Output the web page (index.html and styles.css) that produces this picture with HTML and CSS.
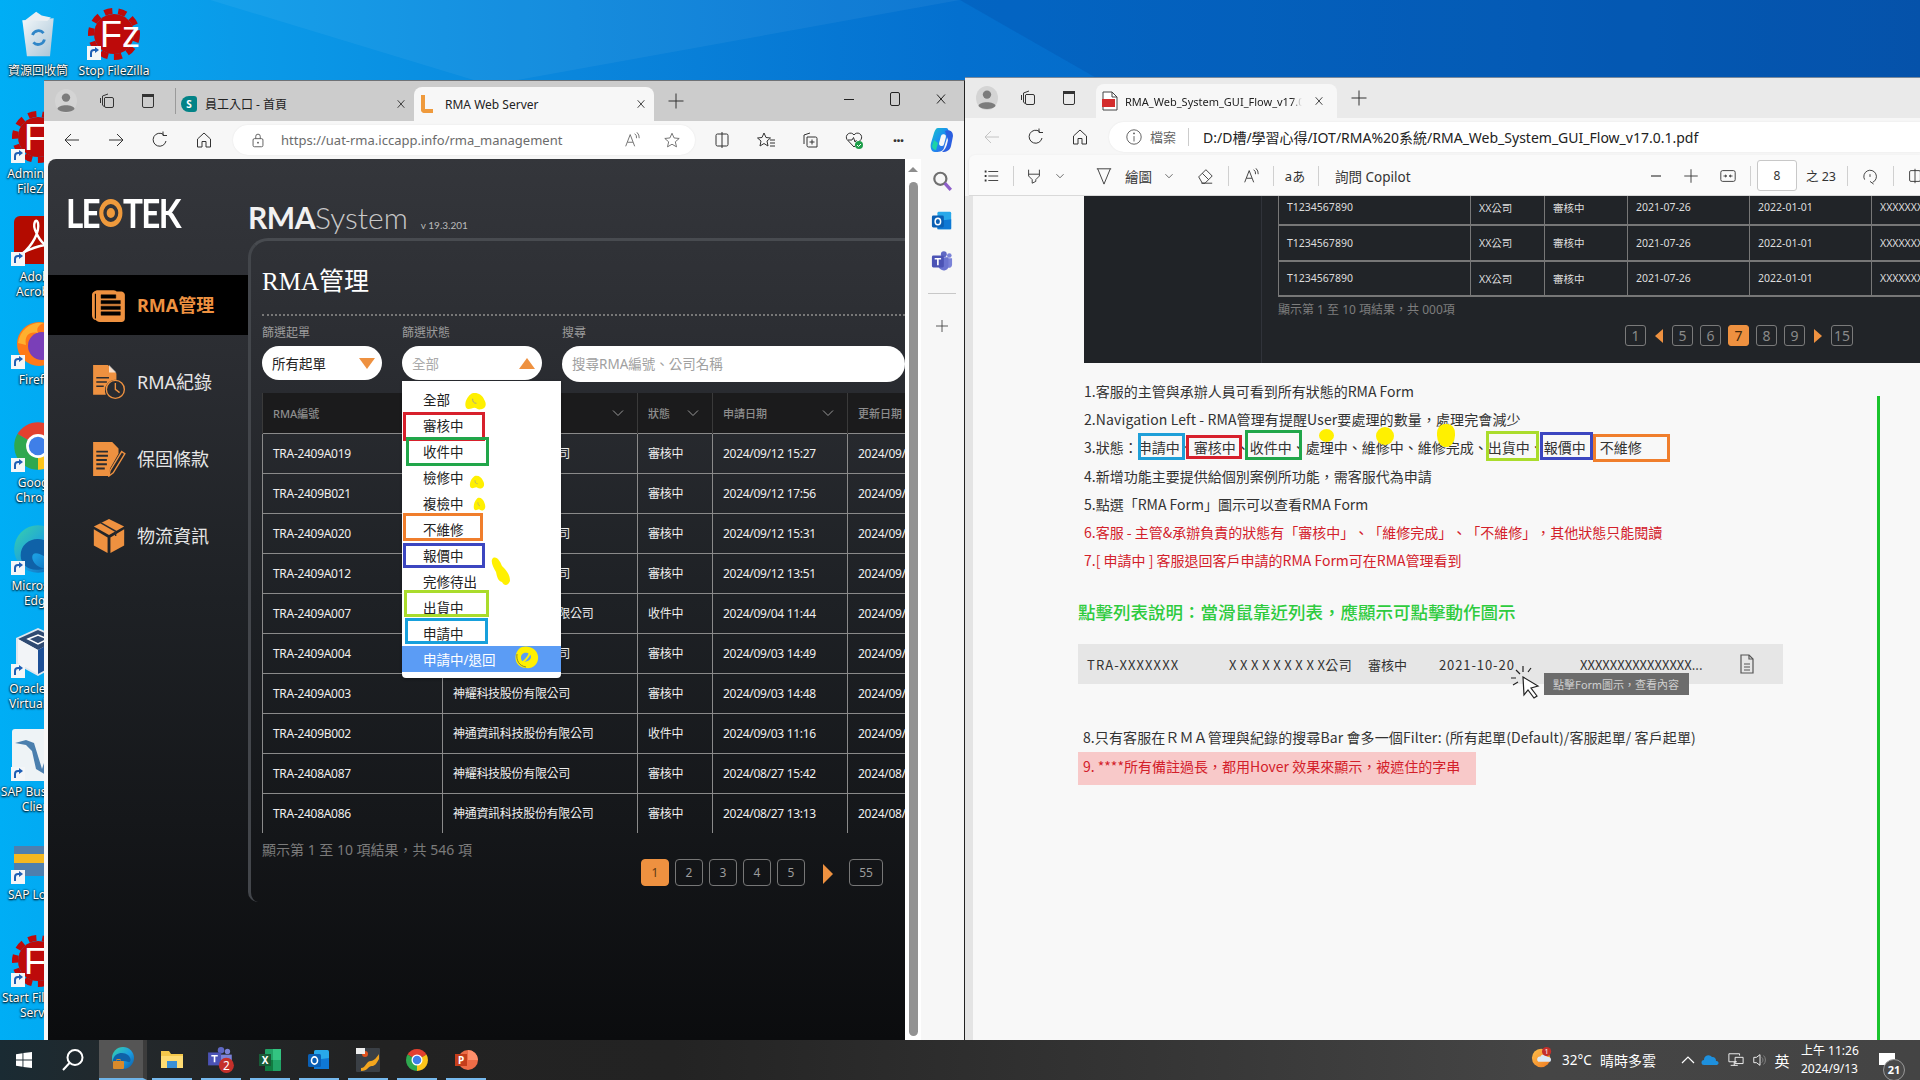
FILE: index.html
```html
<!DOCTYPE html>
<html lang="zh-Hant">
<head>
<meta charset="utf-8">
<title>RMA Web Server</title>
<link rel="stylesheet" href="styles.css">
</head>
<body>
<svg class="sprite" xmlns="http://www.w3.org/2000/svg">
  <defs>
    <linearGradient id="gEdge" x1="0" y1="0" x2="1" y2="1"><stop offset="0" stop-color="#39d3a8"/><stop offset=".55" stop-color="#1b9de2"/><stop offset="1" stop-color="#0c59a4"/></linearGradient>
    <linearGradient id="gCop" x1="0" y1="0" x2="1" y2="1"><stop offset="0" stop-color="#19c6c8"/><stop offset=".5" stop-color="#1b8ff0"/><stop offset="1" stop-color="#3a5be0"/></linearGradient>
    <linearGradient id="gBin" x1="0" y1="0" x2="1" y2="1"><stop offset="0" stop-color="#f2f7fa"/><stop offset="1" stop-color="#a9c4d6"/></linearGradient>
    <linearGradient id="gWx" x1="0" y1="0" x2="1" y2="1"><stop offset="0" stop-color="#ffc04a"/><stop offset="1" stop-color="#ef7b23"/></linearGradient>
  </defs>
  <symbol id="d-fz" viewBox="0 0 52 52"><circle cx="26" cy="26" r="20" fill="#bd0a0a"/><circle cx="26" cy="26" r="23" fill="none" stroke="#bd0a0a" stroke-width="6" stroke-dasharray="8 6"/><text x="12" y="39" font-family="Liberation Sans" font-size="36" fill="#fff">Fz</text></symbol>
  <symbol id="d-bin" viewBox="0 0 52 52"><path d="M9 11L43 9L39 50H14Z" fill="url(#gBin)"/><path d="M12 11L24 2L30 6L40 8L36 12Z" fill="#e9eef2"/><path d="M20 27a7 7 0 0 1 12-2M33 32a7 7 0 0 1-12 3" fill="none" stroke="#2f86c8" stroke-width="3"/></symbol>
  <symbol id="d-acro" viewBox="0 0 52 52"><rect x="2" y="2" width="48" height="48" rx="6" fill="#b30b00"/><path d="M10 40C20 32 28 18 26 9C24 3 20 10 24 18C28 28 36 36 44 33C46 31 38 29 28 32C20 34 12 38 10 40Z" fill="none" stroke="#fff" stroke-width="2.4"/></symbol>
  <symbol id="d-ff" viewBox="0 0 52 52"><circle cx="27" cy="27" r="22" fill="#ff7a18"/><circle cx="30" cy="29" r="14" fill="#7a3fb8"/><path d="M6 26C8 12 20 4 32 6C26 8 24 12 26 16C18 14 12 18 14 28Z" fill="#ffb02e"/><path d="M34 6C44 8 50 18 49 28C46 18 40 12 34 6Z" fill="#ffd93a"/></symbol>
  <symbol id="d-chrome" viewBox="0 0 48 48"><path d="M24 24L5 13A22 22 0 0 1 43 13Z" fill="#e3402f"/><path d="M24 24L43 13A22 22 0 0 1 24 46Z" fill="#fcc419"/><path d="M24 24L24 46A22 22 0 0 1 5 13Z" fill="#2fa84f"/><circle cx="24" cy="24" r="11" fill="#fff"/><circle cx="24" cy="24" r="8.5" fill="#3f7fe8"/></symbol>
  <symbol id="d-edge" viewBox="0 0 48 48"><circle cx="24" cy="24" r="22" fill="url(#gEdge)"/><path d="M8 30C8 18 20 12 30 16C40 20 42 30 36 32C30 33 28 28 22 28C16 28 18 40 30 42C18 46 8 40 8 30Z" fill="#0f62a8"/></symbol>
  <symbol id="d-vbox" viewBox="0 0 52 52"><path d="M26 2L48 12V38L26 50L4 38V12Z" fill="#dfe6ee"/><path d="M26 4L46 13L26 24L6 13Z" fill="#2f4a72"/><path d="M26 24V48L46 37V13Z" fill="#1d4f96"/><path d="M6 13L26 24V48L6 37Z" fill="#f2f4f7"/><path d="M16 13L26 9L36 13L26 18Z" fill="none" stroke="#fff" stroke-width="1.4"/></symbol>
  <symbol id="d-sap" viewBox="0 0 52 52"><rect width="52" height="52" rx="3" fill="#eef3f6"/><path d="M3 14L14 11L22 14L30 40L38 16L46 8L44 30L34 46L24 40L20 22L14 16Z" fill="#4b7fae"/></symbol>
  <symbol id="d-saplo" viewBox="0 0 52 52"><path d="M2 14H44V44H2Z" fill="#4e7fae"/><path d="M2 22H44L36 31H2Z" fill="#f5b81f"/></symbol>
  <symbol id="d-short" viewBox="0 0 14 14"><rect width="14" height="14" fill="#f4f6f8"/><path d="M4 11V7A3 3 0 0 1 7 4H9" fill="none" stroke="#1f5fb5" stroke-width="2"/><path d="M8 1L12 4L8 7Z" fill="#1f5fb5"/></symbol>

  <symbol id="i-profile" viewBox="0 0 24 24"><ellipse cx="12" cy="12" rx="11" ry="12" fill="#d4d4d4"/><circle cx="12" cy="8.6" r="4.2" fill="#7c7c7c"/><path d="M3.5 20C4 15 20 15 20.5 20C18 24 6 24 3.5 20Z" fill="#7c7c7c"/></symbol>
  <symbol id="i-coll" viewBox="0 0 20 20"><path d="M8 6.5H15A1.5 1.5 0 0 1 16.500 8V15A1.500 1.500 0 0 1 15 16.500H9A1.500 1.500 0 0 1 7.500 15V7ZM5.500 5L11 3M5.500 5V14L7.500 16M3.500 7V12" fill="none" stroke="currentColor"/></symbol>
  <symbol id="i-vtabs" viewBox="0 0 20 20"><rect x="4.500" y="3.500" width="11" height="13" rx="1.500" fill="none" stroke="currentColor"/><rect x="4" y="3" width="12" height="3" fill="currentColor"/></symbol>
  <symbol id="i-back" viewBox="0 0 20 20"><path d="M17 10H3M9 4L3 10L9 16" fill="none" stroke="currentColor"/></symbol>
  <symbol id="i-fwd" viewBox="0 0 20 20"><path d="M3 10H17M11 4L17 10L11 16" fill="none" stroke="currentColor"/></symbol>
  <symbol id="i-refresh" viewBox="0 0 20 20"><path d="M16 11A6.500 6.500 0 1 1 13.500 4.500M13 1.500V5.500H17" fill="none" stroke="currentColor"/></symbol>
  <symbol id="i-home" viewBox="0 0 20 20"><path d="M3.500 9L10 3L16.500 9V17H12V11.500H8V17H3.500Z" fill="none" stroke="currentColor"/></symbol>
  <symbol id="i-lock" viewBox="0 0 20 20"><rect x="4.500" y="8.500" width="11" height="9" rx="1.500" fill="none" stroke="#555"/><path d="M7.500 8.500V6A2.500 2.500 0 0 1 12.500 6V8.500" fill="none" stroke="#555"/><circle cx="10" cy="13" r="1" fill="#555"/></symbol>
  <symbol id="i-aloud" viewBox="0 0 20 20"><path d="M3 17L8 4L13 17M5 12.500H11" fill="none" stroke="currentColor"/><path d="M13 3A5 5 0 0 1 15 8M15.500 1.500A8 8 0 0 1 18 8" fill="none" stroke="currentColor"/></symbol>
  <symbol id="i-star" viewBox="0 0 20 20"><path d="M10 2.500L12.300 7.700L18 8.300L13.700 12L15 17.600L10 14.700L5 17.600L6.300 12L2 8.300L7.700 7.700Z" fill="none" stroke="currentColor"/></symbol>
  <symbol id="i-split" viewBox="0 0 20 20"><path d="M10 2V18M10 4H5.500A1.500 1.500 0 0 0 4 5.500V14.500A1.500 1.500 0 0 0 5.500 16H10M10 4H14.500A1.500 1.500 0 0 1 16 5.500V14.500A1.500 1.500 0 0 1 14.500 16H10" fill="none" stroke="currentColor"/></symbol>
  <symbol id="i-favs" viewBox="0 0 20 20"><path d="M8 3L10 7.500L14.500 8L11 11L12 16L8 13.500L4 16L5 11L1.500 8L6 7.500ZM14 10H19M14 13H19M14 16H19" fill="none" stroke="currentColor"/></symbol>
  <symbol id="i-addcoll" viewBox="0 0 20 20"><path d="M7 7H15.500A1.500 1.500 0 0 1 17 8.500V17H8.500A1.500 1.500 0 0 1 7 15.500ZM4 5L10 3M4 5V14M12 9.500V14.500M9.500 12H14.500" fill="none" stroke="currentColor"/></symbol>
  <symbol id="i-heart" viewBox="0 0 20 20"><path d="M10 17L3 9.500A4 4 0 0 1 10 5A4 4 0 0 1 17 9.500Z" fill="none" stroke="currentColor"/><path d="M4 10H8L9.500 7.500L11 12L12.500 10" fill="none" stroke="currentColor"/><circle cx="15" cy="15" r="4" fill="#1e9e4a"/><path d="M13 15L14.500 16.500L17 14" fill="none" stroke="#fff"/></symbol>
  <symbol id="i-copilot" viewBox="0 0 24 26"><path d="M8 1H16C20 1 18 7 17 11L14 21C13 25 8 25 5 25C1 25 0 20 1 16L4 6C5 3 6 1 8 1Z" fill="url(#gCop)"/><path d="M15 4C19 2 23 4 23 9L21 19C20 23 17 25 12 25C16 22 17 18 18 13Z" fill="#2b5fe0"/><path d="M4 13L2 19C2 21 4 23 6 23L8 16Z" fill="#1ed4a6"/><rect x="10" y="7" width="5" height="12" rx="2.500" transform="rotate(15 12 13)" fill="#f7f7f7"/></symbol>
  <symbol id="i-search" viewBox="0 0 20 20"><circle cx="8.500" cy="8" r="5.500" fill="none" stroke="#6f6f6f" stroke-width="2"/><path d="M12.500 12L18 18" stroke="#8e5fc9" stroke-width="3"/></symbol>
  <symbol id="i-outlook" viewBox="0 0 24 24"><rect x="7" y="2" width="15" height="19" rx="1.500" fill="#28a8ea"/><path d="M7 12L22 10V21H7Z" fill="#0f78d4"/><rect x="1" y="6" width="13" height="13" rx="1.500" fill="#0a5fb4"/><ellipse cx="7.500" cy="12.500" rx="3" ry="3.600" fill="none" stroke="#fff" stroke-width="1.600"/></symbol>
  <symbol id="i-teams" viewBox="0 0 24 24"><circle cx="20" cy="6" r="2.500" fill="#7b83d8"/><circle cx="14" cy="4.500" r="3.200" fill="#5f68c4"/><path d="M16 9H23V16C23 19 20 20 18 19Z" fill="#7b83d8"/><path d="M8 8H19V18C19 21 16 23 13 22C10 22 8 19 8 17Z" fill="#6b74d0"/><rect x="1" y="6" width="13" height="13" rx="1.500" fill="#4b53b5"/><path d="M4 9.500H11M7.500 9.500V16.500" stroke="#fff" stroke-width="1.800"/></symbol>
  <symbol id="i-plus" viewBox="0 0 20 20"><path d="M10 2.500V17.500M2.500 10H17.500" fill="none" stroke="currentColor"/></symbol>
  <symbol id="i-x" viewBox="0 0 12 12"><path d="M2 1.500L10 10.500M10 1.500L2 10.500" fill="none" stroke="currentColor"/></symbol>
  <symbol id="i-chev" viewBox="0 0 14 14"><path d="M2 4.500L7 9.500L12 4.500" fill="none" stroke="currentColor"/></symbol>
  <symbol id="i-doc" viewBox="0 0 30 30"><path d="M5 2H19C21 2 21 3 22 3H25C28 3 29 5 29 6V27C29 29 28 30 26 30H7C5 30 4 29 3 28H2C1 27 0 26 0 24V6C0 4 3 2 5 2Z" fill="#ee9140"/><path d="M8 11H25V14H8ZM8 16H25V19H8ZM8 21H25V24H8ZM8 6H21V9H8Z" fill="#000" stroke="#000" stroke-width=".4"/><path d="M3 5V27" stroke="#000" stroke-width="1"/></symbol>
  <symbol id="i-dochist" viewBox="0 0 32 34"><path d="M1 1H15L23 9V15A10 10 0 0 0 13 29H1Z" fill="#ee9140"/><path d="M16 1L23 8H16Z" fill="#fff" opacity=".7"/><path d="M4 13H16M4 17H14M4 21H11" stroke="#2a2c30" stroke-width="1.500"/><circle cx="22" cy="24" r="8.500" fill="none" stroke="#ee9140" stroke-width="1.300"/><path d="M22 18V24L26 27" fill="none" stroke="#ee9140" stroke-width="1.300"/></symbol>
  <symbol id="i-terms" viewBox="0 0 32 34"><path d="M1 1H19L25 7V12L17 26L16 33H1Z" fill="#ee9140"/><path d="M4 10H15M4 14H15M4 18H14M4 22H14M4 26H12" stroke="#2a2c30" stroke-width="1.800"/><path d="M28 10L31 12L20 30L16 33L17 28Z" fill="none" stroke="#ee9140" stroke-width="1.300"/></symbol>
  <symbol id="i-box" viewBox="0 0 34 38"><path d="M17 1L33 9L17 18L1 9Z" fill="#ee9140"/><path d="M1 12L15.500 20.500V37L1 29Z" fill="#ee9140"/><path d="M33 12L18.500 20.500V37L33 29Z" fill="#ee9140"/><path d="M8 5L24 14V19" fill="none" stroke="#2a2c30" stroke-width="1.500"/></symbol>
  <symbol id="i-filedoc" viewBox="0 0 14 20"><path d="M1 1H9L13 5V19H1Z" fill="none" stroke="#555" stroke-width="1.200"/><path d="M9 1V5H13M4 10H10M4 13H10M4 16H10" fill="none" stroke="#555" stroke-width="1.200"/></symbol>
  <symbol id="i-pdf" viewBox="0 0 16 20"><path d="M1 1H10L15 6V19H1Z" fill="#fff" stroke="#444"/><path d="M10 1V6H15" fill="none" stroke="#444"/><rect y="8" width="13" height="8" fill="#d32c2c"/></symbol>
  <symbol id="i-list" viewBox="0 0 20 20"><path d="M7 5H18M7 10H18M7 15H18" stroke="#333"/><path d="M3 5H5M3 10H5M3 15H5" stroke="#333" stroke-width="2"/></symbol>
  <symbol id="i-hl" viewBox="0 0 20 20"><path d="M4 3V10L8 14V18L12 16V14L16 10V3M4 8H16" fill="none" stroke="#333"/></symbol>
  <symbol id="i-draw" viewBox="0 0 20 20"><path d="M2 2H18M3 2L10 19L17 2" fill="none" stroke="#333"/></symbol>
  <symbol id="i-eraser" viewBox="0 0 20 20"><path d="M3 11L11 3L18 10L10 18H7ZM6 18H18M7 7L14 14" fill="none" stroke="#333"/></symbol>
  <symbol id="i-fit" viewBox="0 0 20 20"><rect x="2" y="4" width="16" height="12" rx="2" fill="none" stroke="#333"/><path d="M5 10H8M12 10H15" stroke="#333"/><path d="M7 8L9 10L7 12ZM13 8L11 10L13 12Z" fill="#333"/></symbol>
  <symbol id="i-rotate" viewBox="0 0 20 20"><path d="M4 14A7 7 0 1 1 13 17M10 8V11" fill="none" stroke="#333"/><path d="M10 16L14 19" stroke="#333"/></symbol>
  <symbol id="i-info" viewBox="0 0 20 20"><circle cx="10" cy="10" r="8" fill="none" stroke="#555"/><path d="M10 9V15" stroke="#555"/><circle cx="10" cy="6" r="1" fill="#555"/></symbol>
  <symbol id="i-start" viewBox="0 0 16 16"><path d="M0 2.200L6.500 1.300V7.500H0ZM7.400 1.100L16 0V7.500H7.400ZM0 8.400H6.500V14.700L0 13.800ZM7.400 8.400H16V16L7.400 14.900Z" fill="#fff"/></symbol>
  <symbol id="i-tsearch" viewBox="0 0 24 24"><circle cx="14" cy="9.500" r="7.500" fill="none" stroke="#fff" stroke-width="2"/><path d="M8.500 15L2 22" stroke="#fff" stroke-width="2"/></symbol>
  <symbol id="t-folder" viewBox="0 0 24 24"><path d="M1 3H9L11 6H23V20H1Z" fill="#f5c84b"/><path d="M1 8H23V20H1Z" fill="#ffdc73"/><rect x="7" y="13" width="10" height="7" fill="#3a8fd6"/></symbol>
  <symbol id="t-teams" viewBox="0 0 26 26"><circle cx="19" cy="5" r="2.500" fill="#7b83d8"/><circle cx="13" cy="4" r="3" fill="#5f68c4"/><rect x="1" y="6" width="12" height="12" fill="#4b53b5"/><path d="M4 9H10M7 9V15" stroke="#fff" stroke-width="1.500"/><path d="M13 8H23V16H13Z" fill="#7b83d8"/><circle cx="18" cy="18" r="7" fill="#c4302b"/><text x="18" y="22" font-family="Noto Sans" font-size="11" fill="#fff" text-anchor="middle">2</text></symbol>
  <symbol id="t-excel" viewBox="0 0 24 24"><rect x="7" y="1" width="16" height="22" rx="1" fill="#21a366"/><rect x="15" y="1" width="8" height="11" fill="#33c481"/><rect x="7" y="12" width="8" height="11" fill="#107c41"/><rect x="1" y="6" width="12" height="12" fill="#185c37"/><text x="7" y="16" font-family="Noto Sans" font-size="10" font-weight="700" fill="#fff" text-anchor="middle">X</text></symbol>
  <symbol id="t-c4" viewBox="0 0 24 24"><rect width="24" height="24" rx="1" fill="#3a3f45"/><path d="M5 20C10 20 10 13 15 13C18 13 21 9 23 6V11C20 16 19 18 16 18C12 18 12 23 5 23Z" fill="#f2a51e"/><circle cx="9" cy="6" r="3" fill="#e2521d"/><rect width="9" height="6" fill="#eee"/></symbol>
  <symbol id="t-ppt" viewBox="0 0 24 24"><circle cx="14" cy="12" r="10" fill="#ed6c47"/><path d="M14 2A10 10 0 0 1 24 12H14Z" fill="#ff8f6b"/><rect x="1" y="6" width="12" height="12" fill="#c43e1c"/><text x="7" y="16" font-family="Noto Sans" font-size="10" font-weight="700" fill="#fff" text-anchor="middle">P</text></symbol>
  <symbol id="t-edge" viewBox="0 0 24 24"><circle cx="12" cy="11" r="11" fill="url(#gEdge)"/><path d="M2 13C3 6 12 4 17 8C21 12 20 16 17 15C13 14 10 13 10 17C10 20 13 22 15 22C8 24 1 20 2 13Z" fill="#0f62a8"/><rect x="2" y="14" width="11" height="8" rx="1" fill="#d98a2b"/><rect x="6" y="12.500" width="3" height="2" fill="none" stroke="#d98a2b"/></symbol>
  <symbol id="t-wx" viewBox="0 0 24 24"><circle cx="11" cy="12" r="10" fill="url(#gWx)"/><path d="M8 16A3 3 0 0 1 10 10.500A4.500 4.500 0 0 1 18 11A3 3 0 0 1 21 16Z" fill="#dbe8f5"/><circle cx="17" cy="5" r="5" fill="#c4302b"/><text x="17" y="8" font-family="Noto Sans" font-size="8" fill="#fff" text-anchor="middle">1</text></symbol>
  <symbol id="t-cloud" viewBox="0 0 18 12"><path d="M3 11A2.500 2.500 0 0 1 3 6A4.500 4.500 0 0 1 11 3A3.500 3.500 0 0 1 15 7A2 2 0 0 1 16 11Z" fill="#1e90dd"/></symbol>
  <symbol id="t-net" viewBox="0 0 18 18"><path d="M1 2H13V4M1 2V11H10M7 11V15M3 15H11" fill="none" stroke="#fff"/><path d="M8 6H17V13H8Z" fill="none" stroke="#fff"/></symbol>
  <symbol id="t-vol" viewBox="0 0 18 18"><path d="M2 6H5L9 3V15L5 12H2Z" fill="none" stroke="#fff"/><path d="M11 6A4 4 0 0 1 11 12M13 4A7 7 0 0 1 13 14" fill="none" stroke="#888"/></symbol>
  <symbol id="t-chevup" viewBox="0 0 14 14"><path d="M1 10L7 4L13 10" fill="none" stroke="#fff" stroke-width="1.200"/></symbol>
  <symbol id="c-cursor" viewBox="0 0 32 34"><path d="M13 12L28 21L21 23L27 31L24 33L18 25L14 30Z" fill="#fff" stroke="#222" stroke-width="1.200"/><path d="M10 9L6 5M13 7V1M6 13H1M8 17L3 20M18 7L21 3" stroke="#222" stroke-width="1.200"/></symbol>
  <symbol id="c-blob" viewBox="0 0 24 24" preserveAspectRatio="none"><path d="M8 2C14 0 19 4 21 10C24 16 23 22 18 23C14 24 13 21 11 21C8 21 6 24 3 22C0 19 1 8 8 2Z" fill="#fff000"/><path d="M9 9C9 13 10 15 13 15" fill="none" stroke="#999" stroke-width="1"/></symbol>
  <symbol id="c-long" viewBox="0 0 21 29" preserveAspectRatio="none"><path d="M3 1C7 -1 10 4 12 9C16 13 20 17 20 24C18 29 14 29 12 25C8 24 7 20 6 15C3 10 0 4 3 1Z" fill="#fff000"/></symbol>
  <symbol id="c-ring" viewBox="0 0 25 23" preserveAspectRatio="none"><path fill-rule="evenodd" d="M8 1C15 -1 23 3 24 10C25 18 19 23 12 22C4 22 0 15 2 8C3 5 5 2 8 1ZM10 7C7 8 6 12 8 15C12 17 17 14 17 11C17 8 13 6 10 7Z" fill="#fff000"/><path d="M6 18C11 15 14 12 16 7" fill="none" stroke="#fff000" stroke-width="2"/><path d="M3 8C2 14 5 20 12 21" fill="none" stroke="#6b6b40" stroke-width=".8"/></symbol>
</svg>

<div class="desktop">
  <svg class="wall-ray" viewBox="0 0 1920 1080" preserveAspectRatio="none"><polygon points="210,0 960,0 490,85" fill="#fff" opacity=".05"/><polygon points="960,0 1920,0 1920,80 1100,80" fill="#003a94" opacity=".2"/></svg>

  <div class="icon-col col-a">
    <div class="d-item"><div class="d-icon"><svg class="d-img d-narrow"><use href="#d-bin"/></svg></div><div class="d-label">資源回收筒</div></div>
    <div class="d-item"><div class="d-icon"><svg class="d-img"><use href="#d-fz"/></svg><svg class="d-badge"><use href="#d-short"/></svg></div><div class="d-label">Administer<br>FileZilla</div></div>
    <div class="d-item"><div class="d-icon"><svg class="d-img"><use href="#d-acro"/></svg><svg class="d-badge"><use href="#d-short"/></svg></div><div class="d-label">Adobe<br>Acrobat</div></div>
    <div class="d-item"><div class="d-icon"><svg class="d-img"><use href="#d-ff"/></svg><svg class="d-badge"><use href="#d-short"/></svg></div><div class="d-label">Firefox</div></div>
    <div class="d-item"><div class="d-icon"><svg class="d-img"><use href="#d-chrome"/></svg><svg class="d-badge"><use href="#d-short"/></svg></div><div class="d-label">Google<br>Chrome</div></div>
    <div class="d-item"><div class="d-icon"><svg class="d-img"><use href="#d-edge"/></svg><svg class="d-badge"><use href="#d-short"/></svg></div><div class="d-label">Microsoft<br>Edge</div></div>
    <div class="d-item"><div class="d-icon"><svg class="d-img"><use href="#d-vbox"/></svg><svg class="d-badge"><use href="#d-short"/></svg></div><div class="d-label">Oracle VM<br>VirtualBox</div></div>
    <div class="d-item"><div class="d-icon"><svg class="d-img"><use href="#d-sap"/></svg><svg class="d-badge"><use href="#d-short"/></svg></div><div class="d-label">SAP Business<br>Client</div></div>
    <div class="d-item"><div class="d-icon"><svg class="d-img"><use href="#d-saplo"/></svg><svg class="d-badge"><use href="#d-short"/></svg></div><div class="d-label">SAP Logon</div></div>
    <div class="d-item"><div class="d-icon"><svg class="d-img"><use href="#d-fz"/></svg><svg class="d-badge"><use href="#d-short"/></svg></div><div class="d-label">Start FileZilla<br>Server</div></div>
  </div>
  <div class="icon-col col-b">
    <div class="d-item"><div class="d-icon"><svg class="d-img"><use href="#d-fz"/></svg><svg class="d-badge"><use href="#d-short"/></svg></div><div class="d-label">Stop FileZilla</div></div>
  </div>

  <!-- Left browser window -->
  <section class="window win-left">
    <div class="tabstrip strip-grey">
      <span class="tb-btn tb-first"><svg class="ico24"><use href="#i-profile"/></svg></span>
      <span class="tb-btn"><svg class="ico20"><use href="#i-coll"/></svg></span>
      <span class="tb-btn"><svg class="ico20"><use href="#i-vtabs"/></svg></span>
      <span class="tab-sep"></span>
      <div class="tab tab-idle">
        <span class="fav-sp">S</span>
        <span class="tab-title">員工入口 - 首頁</span>
        <svg class="tab-x"><use href="#i-x"/></svg>
      </div>
      <div class="tab tab-on">
        <span class="fav-l"></span>
        <span class="tab-title">RMA Web Server</span>
        <svg class="tab-x"><use href="#i-x"/></svg>
      </div>
      <span class="tb-plus"><svg class="ico20"><use href="#i-plus"/></svg></span>
      <div class="win-ctrls">
        <span class="ctrl"><i class="c-min"></i></span>
        <span class="ctrl"><i class="c-max"></i></span>
        <span class="ctrl"><svg class="ico12"><use href="#i-x"/></svg></span>
      </div>
    </div>
    <div class="navbar">
      <span class="nav-btn"><svg class="ico20"><use href="#i-back"/></svg></span>
      <span class="nav-btn"><svg class="ico20"><use href="#i-fwd"/></svg></span>
      <span class="nav-btn"><svg class="ico20"><use href="#i-refresh"/></svg></span>
      <span class="nav-btn"><svg class="ico20"><use href="#i-home"/></svg></span>
      <div class="addr addr-left">
        <svg class="ico18 addr-lock"><use href="#i-lock"/></svg>
        <span class="url-grey">https://uat-rma.iccapp.info/rma_management</span>
        <span class="addr-end">
          <svg class="ico18 muted"><use href="#i-aloud"/></svg>
          <svg class="ico18 muted"><use href="#i-star"/></svg>
        </span>
      </div>
      <div class="nav-tools">
        <span class="nav-tool"><svg class="ico20"><use href="#i-split"/></svg></span>
        <span class="nav-tool"><svg class="ico20"><use href="#i-favs"/></svg></span>
        <span class="nav-tool"><svg class="ico20"><use href="#i-addcoll"/></svg></span>
        <span class="nav-tool"><svg class="ico20"><use href="#i-heart"/></svg></span>
        <span class="nav-tool nav-dots">···</span>
        <span class="nav-tool"><svg class="ico-cop"><use href="#i-copilot"/></svg></span>
      </div>
    </div>
    <div class="browser-body">
      <div class="app">
        <aside class="side">
          <div class="logo"><div class="logo-in"><span>LE</span><svg class="logo-o" viewBox="0 0 30 30"><circle cx="15" cy="15" r="11.500" fill="none" stroke="#ef9a3c" stroke-width="5"/><circle cx="15" cy="15" r="5" fill="#ef9a3c"/></svg><span>TEK</span></div></div>
          <nav class="menu">
            <a class="menu-item menu-on"><svg class="m-ico"><use href="#i-doc"/></svg><span>RMA管理</span></a>
            <a class="menu-item"><svg class="m-ico"><use href="#i-dochist"/></svg><span>RMA紀錄</span></a>
            <a class="menu-item"><svg class="m-ico"><use href="#i-terms"/></svg><span>保固條款</span></a>
            <a class="menu-item"><svg class="m-ico"><use href="#i-box"/></svg><span>物流資訊</span></a>
          </nav>
        </aside>
        <main class="main">
          <header class="brand"><strong>RMA</strong><span class="brand-sys">System</span><span class="brand-ver">v 19.3.201</span></header>
          <div class="panel">
            <h1 class="panel-title">RMA管理</h1>
            <div class="filters">
              <div class="f-group f-a">
                <label class="f-label">篩選起單</label>
                <div class="pill-select"><span>所有起單</span><svg class="tri"><polygon points="0,0 16,0 8,11" fill="#ee9140"/></svg></div>
              </div>
              <div class="f-group f-b">
                <label class="f-label">篩選狀態</label>
                <div class="pill-select pill-open"><span>全部</span><svg class="tri"><polygon points="0,11 16,11 8,0" fill="#ee9140"/></svg></div>
                <ul class="dropdown">
                  <li>全部</li><li>審核中</li><li>收件中</li><li>檢修中</li><li>複檢中</li><li>不維修</li><li>報價中</li><li>完修待出</li><li>出貨中</li><li>申請中</li><li class="dd-on">申請中/退回</li>
                  <span class="dd-mark m-red"></span><span class="dd-mark m-green"></span><span class="dd-mark m-orange"></span><span class="dd-mark m-indigo"></span><span class="dd-mark m-lime"></span><span class="dd-mark m-blue"></span>
                  <svg class="dd-blob b1"><use href="#c-blob"/></svg><svg class="dd-blob b2"><use href="#c-blob"/></svg><svg class="dd-blob b3"><use href="#c-blob"/></svg><svg class="dd-blob b4"><use href="#c-long"/></svg><svg class="dd-blob b5"><use href="#c-ring"/></svg>
                </ul>
              </div>
              <div class="f-group f-c">
                <label class="f-label">搜尋</label>
                <div class="search">搜尋RMA編號、公司名稱</div>
              </div>
            </div>
            <div class="table-wrap">
              <table class="rma">
                <thead><tr><th>RMA編號</th><th class="sortable"><svg class="th-chev"><use href="#i-chev"/></svg>公司</th><th class="sortable">狀態<svg class="th-chev"><use href="#i-chev"/></svg></th><th class="sortable">申請日期<svg class="th-chev"><use href="#i-chev"/></svg></th><th>更新日期</th></tr></thead>
                <tbody>
                  <tr><td>TRA-2409A019</td><td>神耀科技股份有限公司</td><td>審核中</td><td>2024/09/12 15:27</td><td>2024/09/12 15:27</td></tr>
                  <tr><td>TRA-2409B021</td><td>神耀科技股份公司</td><td>審核中</td><td>2024/09/12 17:56</td><td>2024/09/12 17:56</td></tr>
                  <tr><td>TRA-2409A020</td><td>神耀科技股份有限公司</td><td>審核中</td><td>2024/09/12 15:31</td><td>2024/09/12 15:31</td></tr>
                  <tr><td>TRA-2409A012</td><td>神耀科技股份有限公司</td><td>審核中</td><td>2024/09/12 13:51</td><td>2024/09/12 13:51</td></tr>
                  <tr><td>TRA-2409A007</td><td>神通資訊科技股份有限公司</td><td>收件中</td><td>2024/09/04 11:44</td><td>2024/09/04 11:44</td></tr>
                  <tr><td>TRA-2409A004</td><td>神耀科技股份有限公司</td><td>審核中</td><td>2024/09/03 14:49</td><td>2024/09/03 14:49</td></tr>
                  <tr><td>TRA-2409A003</td><td>神耀科技股份有限公司</td><td>審核中</td><td>2024/09/03 14:48</td><td>2024/09/03 14:48</td></tr>
                  <tr><td>TRA-2409B002</td><td>神通資訊科技股份有限公司</td><td>收件中</td><td>2024/09/03 11:16</td><td>2024/09/03 11:16</td></tr>
                  <tr><td>TRA-2408A087</td><td>神耀科技股份有限公司</td><td>審核中</td><td>2024/08/27 15:42</td><td>2024/08/27 15:42</td></tr>
                  <tr><td>TRA-2408A086</td><td>神通資訊科技股份有限公司</td><td>審核中</td><td>2024/08/27 13:13</td><td>2024/08/27 13:13</td></tr>
                </tbody>
              </table>
            </div>
            <div class="t-info">顯示第 1 至 10 項結果，共 546 項</div>
            <div class="pager">
              <span class="pg pg-on">1</span><span class="pg">2</span><span class="pg">3</span><span class="pg">4</span><span class="pg">5</span>
              <svg class="pg-arrow" viewBox="0 0 10 20"><polygon points="0,0 10,10 0,20" fill="#ee9140"/></svg>
              <span class="pg pg-last">55</span>
            </div>
          </div>
        </main>
      </div>
      <div class="scrollbar"><i class="sb-up"></i><i class="sb-thumb"></i></div>
      <aside class="edge-side">
        <svg class="side-ico"><use href="#i-search"/></svg>
        <svg class="side-ico"><use href="#i-outlook"/></svg>
        <svg class="side-ico"><use href="#i-teams"/></svg>
        <span class="side-div"></span>
        <svg class="side-plus"><use href="#i-plus"/></svg>
      </aside>
    </div>
  </section>

  <!-- Right browser window -->
  <section class="window win-right">
    <div class="tabstrip strip-light">
      <span class="tb-btn tb-first"><svg class="ico24"><use href="#i-profile"/></svg></span>
      <span class="tb-btn"><svg class="ico20"><use href="#i-coll"/></svg></span>
      <span class="tb-btn"><svg class="ico20"><use href="#i-vtabs"/></svg></span>
      <div class="tab tab-on tab-pdf">
        <svg class="fav-pdf"><use href="#i-pdf"/></svg>
        <span class="tab-title tab-clip">RMA_Web_System_GUI_Flow_v17.0.1.pdf</span>
        <svg class="tab-x"><use href="#i-x"/></svg>
      </div>
      <span class="tb-plus"><svg class="ico20"><use href="#i-plus"/></svg></span>
    </div>
    <div class="navbar nav-right">
      <span class="nav-btn nav-dim"><svg class="ico20"><use href="#i-back"/></svg></span>
      <span class="nav-btn"><svg class="ico20"><use href="#i-refresh"/></svg></span>
      <span class="nav-btn"><svg class="ico20"><use href="#i-home"/></svg></span>
      <div class="addr addr-right">
        <svg class="ico18"><use href="#i-info"/></svg>
        <span class="addr-file">檔案</span>
        <i class="addr-sep"></i>
        <span class="url-dark">D:/D槽/學習心得/IOT/RMA%20系統/RMA_Web_System_GUI_Flow_v17.0.1.pdf</span>
      </div>
    </div>
    <div class="pdf-bar">
      <span class="pb"><svg class="ico18"><use href="#i-list"/></svg></span>
      <span class="pb-sep"></span>
      <span class="pb"><svg class="ico18"><use href="#i-hl"/></svg></span>
      <span class="pb"><svg class="ico10"><use href="#i-chev"/></svg></span>
      <span class="pb pb-draw"><svg class="ico18"><use href="#i-draw"/></svg><em>繪圖</em></span>
      <span class="pb"><svg class="ico10"><use href="#i-chev"/></svg></span>
      <span class="pb"><svg class="ico18"><use href="#i-eraser"/></svg></span>
      <span class="pb-sep"></span>
      <span class="pb"><svg class="ico18"><use href="#i-aloud"/></svg></span>
      <span class="pb-sep"></span>
      <span class="pb pb-aa">aあ</span>
      <span class="pb-sep"></span>
      <span class="pb pb-copilot">詢問 Copilot</span>
      <span class="pb pb-minus"><i></i></span>
      <span class="pb"><svg class="ico18"><use href="#i-plus"/></svg></span>
      <span class="pb"><svg class="ico18"><use href="#i-fit"/></svg></span>
      <span class="pb-sep"></span>
      <span class="pb"><span class="pb-input">8</span></span>
      <span class="pb pb-total">之 23</span>
      <span class="pb-sep"></span>
      <span class="pb"><svg class="ico18"><use href="#i-rotate"/></svg></span>
      <span class="pb-sep"></span>
      <span class="pb"><svg class="ico18"><use href="#i-split"/></svg></span>
    </div>
    <div class="pdf-view">
      <div class="pdf-page">
        <div class="shot">
          <div class="shot-side"></div>
          <div class="shot-main">
            <table class="shot-table">
              <tr><td>T1234567890</td><td>XX公司</td><td>審核中</td><td>2021-07-26</td><td>2022-01-01</td><td>XXXXXXXXXXX</td></tr>
              <tr><td>T1234567890</td><td>XX公司</td><td>審核中</td><td>2021-07-26</td><td>2022-01-01</td><td>XXXXXXXXXXX</td></tr>
              <tr><td>T1234567890</td><td>XX公司</td><td>審核中</td><td>2021-07-26</td><td>2022-01-01</td><td>XXXXXXXXXXX</td></tr>
            </table>
            <div class="shot-info">顯示第 1 至 10 項結果，共 000項</div>
            <div class="shot-pager">
              <span class="sp">1</span><svg class="sp-arr" viewBox="0 0 8 14"><polygon points="8,0 0,7 8,14" fill="#ee9140"/></svg><span class="sp">5</span><span class="sp">6</span><span class="sp sp-on">7</span><span class="sp">8</span><span class="sp">9</span><svg class="sp-arr" viewBox="0 0 8 14"><polygon points="0,0 8,7 0,14" fill="#ee9140"/></svg><span class="sp">15</span>
            </div>
          </div>
        </div>
        <div class="notes">
          <p>1.客服的主管與承辦人員可看到所有狀態的RMA Form</p>
          <p class="note-wide">2.Navigation Left - RMA管理有提醒User要處理的數量，處理完會減少</p>
          <p>3.狀態：申請中、審核中、收件中、處理中、維修中、維修完成、出貨中、報價中、不維修</p>
          <p>4.新增功能主要提供給個別案例所功能，需客服代為申請</p>
          <p>5.點選「RMA Form」圖示可以查看RMA Form</p>
          <p class="note-red">6.客服 - 主管&amp;承辦負責的狀態有「審核中」、「維修完成」、「不維修」，其他狀態只能閱讀</p>
          <p class="note-red">7.[ 申請中 ] 客服退回客戶申請的RMA Form可在RMA管理看到</p>
          <h2 class="note-head">點擊列表說明：當滑鼠靠近列表，應顯示可點擊動作圖示</h2>
          <div class="demo-row">
            <span class="dr-id">TRA-XXXXXXX</span>
            <span class="dr-co">X X X X X X X X X公司</span>
            <span class="dr-st">審核中</span>
            <span class="dr-dt">2021-10-20</span>
            <span class="dr-xx">XXXXXXXXXXXXXXX...</span>
            <svg class="dr-doc"><use href="#i-filedoc"/></svg>
            <svg class="dr-cursor"><use href="#c-cursor"/></svg>
            <span class="dr-tip">點擊Form圖示，查看內容</span>
          </div>
          <p class="note-8 note-wide">8.只有客服在ＲＭＡ管理與紀錄的搜尋Bar 會多一個Filter: (所有起單(Default)/客服起單/ 客戶起單)</p>
          <p class="note-9">9. ****所有備註過長，都用Hover 效果來顯示，被遮住的字串</p>
        </div>
        <span class="st-box st-blue"></span><span class="st-box st-red"></span><span class="st-box st-green"></span><span class="st-box st-lime"></span><span class="st-box st-indigo"></span><span class="st-box st-orange"></span>
        <i class="y-dot y1"></i><i class="y-dot y2"></i><i class="y-dot y3"></i>
        <i class="green-rule"></i>
      </div>
    </div>
  </section>

  <!-- Taskbar -->
  <footer class="taskbar">
    <div class="tk-left">
      <span class="tk-start"><svg class="ico16"><use href="#i-start"/></svg></span>
      <span class="tk-search"><svg class="ico24"><use href="#i-tsearch"/></svg></span>
      <span class="tk-app tk-active"><svg class="ico24"><use href="#t-edge"/></svg></span>
      <span class="tk-app tk-run"><svg class="ico24"><use href="#t-folder"/></svg></span>
      <span class="tk-app tk-run"><svg class="ico26"><use href="#t-teams"/></svg></span>
      <span class="tk-app tk-run"><svg class="ico24"><use href="#t-excel"/></svg></span>
      <span class="tk-app tk-run"><svg class="ico24"><use href="#i-outlook"/></svg></span>
      <span class="tk-app tk-run"><svg class="ico24"><use href="#t-c4"/></svg></span>
      <span class="tk-app tk-run"><svg class="ico24"><use href="#d-chrome"/></svg></span>
      <span class="tk-app tk-run"><svg class="ico24"><use href="#t-ppt"/></svg></span>
    </div>
    <div class="tray">
      <span><svg class="ico22"><use href="#t-wx"/></svg></span>
      <span class="tray-text">32°C</span>
      <span class="tray-text tray-cjk">晴時多雲</span>
      <span class="tray-c"><svg class="ico14"><use href="#t-chevup"/></svg></span>
      <span class="tray-c"><svg class="ico-cloud"><use href="#t-cloud"/></svg></span>
      <span class="tray-c"><svg class="ico16"><use href="#t-net"/></svg></span>
      <span class="tray-c"><svg class="ico16"><use href="#t-vol"/></svg></span>
      <span class="tray-c tray-ime">英</span>
      <span class="clock"><b>上午 11:26</b><b>2024/9/13</b></span>
      <span class="notif"><i class="notif-box"></i><i class="notif-num">21</i></span>
    </div>
  </footer>
</div>
</body>
</html>
```

FILE: styles.css
```css
* { box-sizing: border-box; }
html, body { margin: 0; padding: 0; width: 1920px; height: 1080px; overflow: hidden; }
body { font-family: "Noto Sans", "Noto Sans CJK TC", sans-serif; font-size: 12px; color: #222; text-spacing-trim: space-all; }
.sprite { position: absolute; width: 0; height: 0; }
p, h1, h2, ul { margin: 0; padding: 0; }
em, b, i { font-style: normal; font-weight: 400; }

.desktop { position: relative; width: 1920px; height: 1080px; overflow: hidden;
  background: linear-gradient(90deg, #00aef5 0%, #0a9be9 12%, #0a86dc 30%, #0470cf 50%, #0562bd 80%, #0758b0 100%); }
.wall-ray { position: absolute; inset: 0; width: 100%; height: 100%; }

/* desktop icons */
.icon-col { position: absolute; top: 8px; width: 76px; display: flex; flex-direction: column; }
.col-a { left: 0; }
.col-b { left: 76px; }
.d-item { height: 103px; display: flex; flex-direction: column; align-items: center; }
.d-icon { position: relative; width: 52px; height: 52px; }
.d-img { width: 52px; height: 52px; display: block; }
.d-narrow { width: 48px; margin-left: 2px; }
.d-badge { position: absolute; left: -1px; bottom: 0; width: 14px; height: 14px; }
.d-label { margin-top: 3px; width: 76px; text-align: center; line-height: 15px; color: #fff; white-space: nowrap; text-shadow: 0 1px 2px #000, 0 0 2px #000; }

/* windows */
.window { position: absolute; display: flex; flex-direction: column; overflow: hidden; background: #f7f7f7; }
.win-left { left: 44px; top: 80px; width: 921px; height: 960px; border-top: 1px solid #6f7276; border-right: 1px solid #222; }
.win-right { left: 965px; top: 77px; width: 955px; height: 963px; border-top: 1px solid #7a8a9c; }

.tabstrip { display: flex; align-items: flex-end; height: 40px; flex: none; color: #333; }
.strip-grey { background: #cccccc; }
.strip-light { background: #eaeaea; }
.tb-btn { width: 41px; height: 40px; display: flex; align-items: center; justify-content: center; flex: none; }
.tb-first { margin-left: 2px; width: 40px; }
.tab-sep { width: 1px; height: 26px; margin: 0 0 7px 7px; background: #9a9a9a; flex: none; }
.tab { height: 34px; display: flex; align-items: center; flex: none; padding: 0 8px 0 7px; gap: 8px; border-radius: 8px 8px 0 0; }
.tab-idle { width: 238px; padding-left: 5px; }
.tab-on { background: #f7f7f7; width: 240px; padding-left: 7px; }
.tab-title { flex: 1; white-space: nowrap; overflow: hidden; font-size: 12px; color: #222; }
.tab-x { width: 10px; height: 10px; color: #222; flex: none; }
.tb-plus { width: 44px; height: 40px; display: flex; align-items: center; justify-content: center; flex: none; }
.fav-sp { width: 16px; height: 16px; background: #038387; color: #fff; border-radius: 8px 3px 3px 8px; font-size: 10px; font-weight: 700; line-height: 16px; text-align: center; flex: none; }
.fav-l { width: 12px; height: 18px; border-left: 4px solid #ef9a3c; border-bottom: 4px solid #ef9a3c; border-radius: 0 0 0 4px; flex: none; margin-right: 4px; }
.win-ctrls { margin-left: auto; display: flex; height: 40px; }
.ctrl { width: 46px; height: 40px; display: flex; align-items: center; justify-content: center; padding-bottom: 4px; color: #222; }
.c-min { width: 10px; height: 1px; background: #222; }
.c-max { width: 10px; height: 14px; border: 1px solid #222; border-radius: 2px; }

.navbar { height: 38px; flex: none; display: flex; align-items: center; background: #f7f7f7; color: #333; }
.win-left .navbar { padding-left: 6px; }
.nav-btn { width: 44px; height: 30px; display: flex; align-items: center; justify-content: center; flex: none; }
.addr { height: 30px; background: #fff; border-radius: 15px; display: flex; align-items: center; flex: none; box-shadow: 0 0 2px rgba(0,0,0,.08); }
.addr-left { width: 462px; margin-left: 7px; padding: 0 14px 0 16px; }
.addr-lock { margin-right: 14px; }
.url-grey { font-size: 13px; color: #6b6b6b; white-space: nowrap; }
.addr-end { margin-left: auto; display: flex; gap: 22px; }
.muted { color: #666; }
.nav-tools { display: flex; margin-left: 5px; }
.nav-tool { width: 44px; height: 30px; display: flex; align-items: center; justify-content: center; }
.nav-dots { font-size: 16px; font-weight: 700; letter-spacing: -1px; }
.nav-right { padding-left: 5px; height: 37px; }
.nav-dim { color: #c4c4c4; }
.addr-right { width: 830px; margin-left: 7px; padding-left: 16px; border-radius: 15px 0 0 15px; }
.addr-file { margin-left: 7px; font-size: 13px; color: #666; }
.addr-sep { width: 1px; height: 18px; background: #ccc; margin: 0 14px 0 12px; }
.url-dark { font-size: 14px; color: #222; white-space: nowrap; }

.ico10 { width: 10px; height: 10px; }
.ico12 { width: 12px; height: 12px; }
.ico14 { width: 14px; height: 14px; }
.ico16 { width: 16px; height: 16px; }
.ico18 { width: 18px; height: 18px; flex: none; }
.ico20 { width: 20px; height: 20px; }
.ico22 { width: 22px; height: 22px; }
.ico24 { width: 24px; height: 24px; }
.ico26 { width: 28px; height: 28px; }
.ico-cop { width: 24px; height: 26px; }
.ico-cloud { width: 18px; height: 12px; }

.browser-body { flex: 1; display: flex; min-height: 0; }
.app { width: 857px; margin-left: 4px; border-radius: 8px 0 0 0; display: grid; grid-template-columns: 200px 657px; overflow: hidden;
  background: linear-gradient(180deg, #34363b 0%, #2b2d32 22%, #1e2125 50%, #15171a 75%, #0b0c0e 100%); }
.side { display: flex; flex-direction: column; }
.logo { height: 116px; padding: 30px 0 0 18px; color: #fff; }
.logo-in { display: flex; align-items: flex-start; width: 160px; transform: scaleX(.83); transform-origin: left top; font-family: "Lato", sans-serif; font-weight: 700; font-size: 40px; line-height: 48px; letter-spacing: -2px; }
.logo-o { width: 30px; height: 30px; margin: 9px 0 0 -1px; flex: none; }
.menu { display: flex; flex-direction: column; gap: 17px; }
.menu-item { height: 60px; display: grid; grid-template-columns: 45px auto; align-items: center; padding-left: 44px; padding-bottom: 2px; color: #e6e6e6; font-size: 18px; }
.menu-on { background: #000; color: #ee9140; font-weight: 700; }
.m-ico { width: 34px; height: 36px; margin-top: 2px; }

.main { display: flex; flex-direction: column; min-width: 0; }
.brand { height: 79px; padding-top: 36px; display: flex; align-items: baseline; color: #f1f1f1; font-family: "Lato", sans-serif; font-size: 30px; line-height: 44px; }
.brand strong { font-weight: 700; letter-spacing: -.5px; }
.brand-sys { font-weight: 300; color: #c9c9c9; }
.brand-ver { font-size: 10px; margin-left: 13px; color: #bbb; }
.panel { height: 664px; padding-left: 11px; border-left: 3px solid #43464b; border-top: 3px solid #484b50; border-radius: 20px 0 0 10px; overflow: visible; }
.panel-title { height: 75px; padding-top: 23px; border-bottom: 2px dotted #777; font-family: "Liberation Serif", "Noto Sans CJK TC", serif; font-weight: 400; font-size: 25px; line-height: 36px; color: #fff; }
.filters { display: flex; margin-top: 8px; height: 68px; position: relative; z-index: 2; }
.f-group { position: relative; flex: none; }
.f-a { width: 140px; }
.f-b { width: 160px; }
.f-c { width: 343px; }
.f-label { display: block; height: 22px; line-height: 18px; color: #9b9b9b; font-size: 12px; }
.pill-select { height: 34px; background: #fff; border-radius: 17px; display: flex; align-items: center; justify-content: space-between; padding: 0 7px 0 10px; color: #222; font-size: 13.500px; }
.f-a .pill-select { width: 120px; }
.f-b .pill-select { width: 140px; }
.pill-open { color: #aaa; }
.tri { width: 16px; height: 11px; flex: none; }
.search { height: 36px; background: #fff; border-radius: 18px; line-height: 36px; padding-left: 10px; color: #a0a0a0; font-size: 13.500px; }

.dropdown { position: absolute; left: 0; top: 57px; width: 159px; height: 297px; padding-top: 5px; background: #fff; border-radius: 0 0 4px 4px; list-style: none; box-shadow: 0 1px 3px rgba(0,0,0,.3); z-index: 5; }
.dropdown li { height: 26px; line-height: 28px; padding-left: 21px; color: #222; font-size: 13.500px; }
.dropdown .dd-on { background: #5b9cf5; color: #fff; }
.dd-mark { position: absolute; border: 3px solid; }
.m-red { left: 1px; top: 31px; width: 82px; height: 29px; border-color: #d7202c; }
.m-green { left: 4px; top: 56px; width: 83px; height: 29px; border-color: #21a64a; }
.m-orange { left: 1px; top: 132px; width: 80px; height: 28px; border-color: #f07e2c; }
.m-indigo { left: 1px; top: 162px; width: 82px; height: 25px; border-color: #3c46c0; }
.m-lime { left: 2px; top: 209px; width: 85px; height: 27px; border-color: #aadc2c; }
.m-blue { left: 3px; top: 237px; width: 83px; height: 26px; border-color: #17a0dc; }
.dd-blob { position: absolute; }
.b1 { left: 62px; top: 11px; width: 23px; height: 18px; }
.b2 { left: 67px; top: 94px; width: 16px; height: 14px; }
.b3 { left: 71px; top: 116px; width: 13px; height: 14px; }
.b4 { left: 88px; top: 176px; width: 21px; height: 29px; }
.b5 { left: 112px; top: 265px; width: 25px; height: 23px; }

.table-wrap { width: 643px; height: 440px; overflow: hidden; margin-top: 1px; }
.rma { width: 720px; table-layout: fixed; border-collapse: collapse; color: #efefef; font-size: 12px; }
.rma th:nth-child(1), .rma td:nth-child(1) { width: 180px; }
.rma th:nth-child(2), .rma td:nth-child(2) { width: 195px; }
.rma th:nth-child(3), .rma td:nth-child(3) { width: 75px; }
.rma th:nth-child(4), .rma td:nth-child(4) { width: 135px; }
.rma th:nth-child(5), .rma td:nth-child(5) { width: 135px; }
.rma th { height: 40px; background: #1b1b1c; color: #8e8e8e; font-size: 11px; font-weight: 500; text-align: left; padding: 0 0 0 10px; border-left: 1px solid #3a3a3a; position: relative; }
.th-chev { position: absolute; right: 12px; top: 13px; width: 14px; height: 14px; color: #999; }
.rma td { height: 40px; padding: 0 0 0 10px; border: 1px solid #8a8a8a; white-space: nowrap; overflow: hidden; letter-spacing: -.3px; }

.t-info { margin-top: 7px; height: 20px; line-height: 20px; font-size: 14px; color: #7b7b7b; }
.pager { display: flex; align-items: center; margin: -1px 0 0 379px; gap: 6px; height: 27px; }
.pg { width: 28px; height: 27px; border: 1px solid #777; border-radius: 4px; text-align: center; line-height: 25px; color: #9c9c9c; font-size: 12px; }
.pg-on { background: #ee9140; border-color: #ee9140; color: #5d3a12; }
.pg-arrow { width: 10px; height: 20px; margin: 2px 10px 0 12px; }
.pg-last { width: 34px; }

.scrollbar { width: 16px; flex: none; background: #fff; display: flex; flex-direction: column; align-items: center; }
.sb-up { margin-top: 8px; border-left: 5px solid transparent; border-right: 5px solid transparent; border-bottom: 5px solid #8e8e8e; }
.sb-thumb { width: 9px; height: 854px; margin-top: 10px; background: #929292; border-radius: 5px; }
.edge-side { flex: 1; display: flex; flex-direction: column; align-items: center; padding: 11px 2px 0 0; background: #f7f7f7; }
.side-ico { width: 22px; height: 22px; margin-bottom: 18px; }
.side-div { width: 28px; height: 1px; background: #c8c8c8; margin-top: 3px; }
.side-plus { width: 16px; height: 16px; margin-top: 24px; color: #333; }

.tab-pdf { margin-left: 7px; width: 241px; padding-left: 6px; gap: 3px; }
.fav-pdf { width: 16px; height: 20px; flex: none; margin-right: 4px; }
.tab-clip { flex: none; width: 177px; font-size: 11px; -webkit-mask-image: linear-gradient(90deg, #000 94%, transparent); mask-image: linear-gradient(90deg, #000 94%, transparent); }
.tab-pdf .tab-x { margin-left: 9px; }

.pdf-bar { margin-left: 4px; height: 41px; flex: none; display: grid; align-items: center; background: #fafafa; border-bottom: 1px solid #d9d9d9; border-radius: 6px 0 0 0; box-shadow: 0 1px 3px rgba(0,0,0,.1);
  grid-template-columns: 44px 1px 40px 12px 86px 34px 38px 8px 38px 6px 38px 8px 318px 32px 38px 36px 8px 46px 42px 10px 36px 10px 34px; }
.pb { display: flex; align-items: center; justify-content: center; height: 41px; color: #333; font-size: 13.500px; }
.pb-sep { width: 1px; height: 20px; background: #d0d0d0; justify-self: center; }
.pb-draw { justify-content: flex-end; gap: 12px; }
.pb-aa { font-size: 13px; }
.pb-copilot { justify-content: flex-start; padding-left: 13px; white-space: nowrap; }
.pb-minus i { width: 10px; height: 2px; background: #888; }
.pb-input { width: 40px; height: 31px; border: 1px solid #c8c8c8; border-radius: 3px; background: #fff; text-align: center; line-height: 29px; font-size: 12px; }
.pb-total { font-size: 12.500px; white-space: nowrap; }

.pdf-view { flex: 1; min-height: 0; padding-left: 8px; background: #e4e4e4; }
.pdf-page { position: relative; height: 100%; background: #f8f8f8; padding-left: 111px; overflow: hidden; }

.shot { height: 167px; display: flex; background: #212428; margin-right: -8px; overflow: hidden; }
.shot-side { width: 178px; flex: none; background: #202327; border-right: 1px solid #30333a; }
.shot-main { padding-left: 16px; flex: none; width: 700px; }
.shot-table { border-collapse: collapse; table-layout: fixed; width: 660px; margin-top: -7px; color: #ddd; font-size: 10.500px; }
.shot-table td { height: 35.500px; padding: 0 0 0 8px; border: 1px solid #777; border-bottom-width: 2px; white-space: nowrap; overflow: hidden; }
.shot-table td:nth-child(1) { width: 192px; }
.shot-table td:nth-child(2) { width: 74px; }
.shot-table td:nth-child(3) { width: 83px; }
.shot-table td:nth-child(4) { width: 122px; }
.shot-table td:nth-child(5) { width: 122px; }
.shot-info { margin-top: 3px; height: 20px; line-height: 20px; font-size: 12px; color: #7d7d7d; }
.shot-pager { display: flex; align-items: center; gap: 7px; margin: 5px 0 0 347px; height: 21px; }
.sp { min-width: 21px; height: 21px; padding: 0 2px; border: 1px solid #7a7a7a; border-radius: 3px; text-align: center; line-height: 19px; font-size: 14px; color: #8a8a8a; }
.sp-on { background: #ee9140; border-color: #ee9140; color: #40280c; }
.sp-arr { width: 8px; height: 14px; margin: 0 2px; }

.notes { width: 720px; padding-top: 14px; font-family: "Noto Sans CJK TC", sans-serif; font-size: 14px; color: #333; margin-left: -6px; }
.notes p { height: 28.200px; line-height: 28.200px; padding-left: 6px; white-space: nowrap; }
.notes .note-wide { letter-spacing: .1px; }
.notes .note-red { color: #d3202a; }
.note-head { margin-top: 24px; height: 28px; line-height: 28px; font-size: 17.500px; font-weight: 500; color: #2ecb3e; white-space: nowrap; }
.demo-row { position: relative; margin-top: 18px; width: 705px; height: 40px; background: #e6e6e6; display: grid; grid-template-columns: 142px 139px 71px 141px 160px 20px; align-items: center; padding-left: 9px; white-space: nowrap; font-size: 13px; color: #333; }
.dr-id { letter-spacing: 1.1px; }
.dr-co { letter-spacing: .35px; }
.dr-dt { letter-spacing: .9px; }
.dr-doc { width: 14px; height: 20px; }
.dr-cursor { position: absolute; left: 432px; top: 21px; width: 32px; height: 34px; }
.dr-tip { position: absolute; left: 466px; top: 29px; width: 145px; height: 22px; line-height: 22px; background: #6c6c6c; color: #cfcfcf; font-size: 11px; padding-left: 9px; }
.notes .note-8 { margin-top: 39px; padding-left: 5px; }
.notes .note-9 { width: 398px; height: 33px; line-height: 28px; padding-left: 5px; background: #f8c9c9; color: #d3202a; }

.st-box { position: absolute; border: 3px solid; }
.st-blue { left: 165px; top: 237px; width: 47px; height: 27px; border-color: #1f9fd8; }
.st-red { left: 213px; top: 239px; width: 56px; height: 24px; border-color: #d7202c; }
.st-green { left: 272px; top: 234px; width: 57px; height: 30px; border-color: #21a64a; }
.st-lime { left: 513px; top: 235px; width: 53px; height: 30px; border-color: #aadc2c; }
.st-indigo { left: 567px; top: 236px; width: 53px; height: 28px; border-color: #3c46c0; }
.st-orange { left: 620px; top: 238px; width: 77px; height: 28px; border-color: #f07e2c; }
.y-dot { position: absolute; background: #fff000; border-radius: 50%; }
.y1 { left: 346px; top: 233px; width: 15px; height: 13px; }
.y2 { left: 403px; top: 231px; width: 18px; height: 18px; }
.y3 { left: 464px; top: 228px; width: 18px; height: 23px; border-radius: 40% 40% 50% 50%; }
.green-rule { position: absolute; left: 904px; top: 200px; bottom: 0; width: 3px; background: #1bc42d; }

/* taskbar */
.taskbar { position: absolute; left: 0; right: 0; bottom: 0; height: 40px; display: flex; justify-content: space-between; color: #fff;
  background: linear-gradient(90deg, #1a2b33 0%, #23282b 7%, #222 20%, #232323 35%, #353535 60%, #454545 80%, #444 100%); }
.tk-left { display: flex; }
.tk-start { width: 48px; display: flex; align-items: center; justify-content: center; }
.tk-search { width: 51px; display: flex; align-items: center; justify-content: center; padding-right: 2px; }
.tk-app { width: 49px; height: 40px; display: flex; align-items: center; justify-content: center; position: relative; }
.tk-active { width: 48px; background: #555; border-right: 4px solid #3c3c3c; border-bottom: 2px solid #6fb4e8; padding-left: 4px; }
.tk-run::after { content: ""; position: absolute; left: 5px; right: 4px; bottom: 0; height: 2px; background: #76b9ed; }
.tray { width: 389px; display: grid; grid-template-columns: 31px 38px 80px 16px 28px 24px 24px 20px 78px 50px; align-items: center; }
.tray-text { font-size: 13.500px; white-space: nowrap; }
.tray-cjk { font-family: "Noto Sans CJK TC", sans-serif; font-size: 14px; }
.tray-c { display: flex; justify-content: center; align-items: center; }
.tray-ime { font-size: 15px; }
.clock { display: flex; flex-direction: column; padding-left: 9px; font-size: 12px; line-height: 18px; white-space: nowrap; }
.notif { position: relative; height: 40px; }
.notif-box { position: absolute; left: 9px; top: 13px; width: 16px; height: 12px; background: #fff; }
.notif-num { position: absolute; left: 13px; top: 19px; width: 22px; height: 22px; border: 1px solid #999; border-radius: 50%; background: #4a4a4a; text-align: center; line-height: 20px; font-size: 11px; font-weight: 700; }
```
